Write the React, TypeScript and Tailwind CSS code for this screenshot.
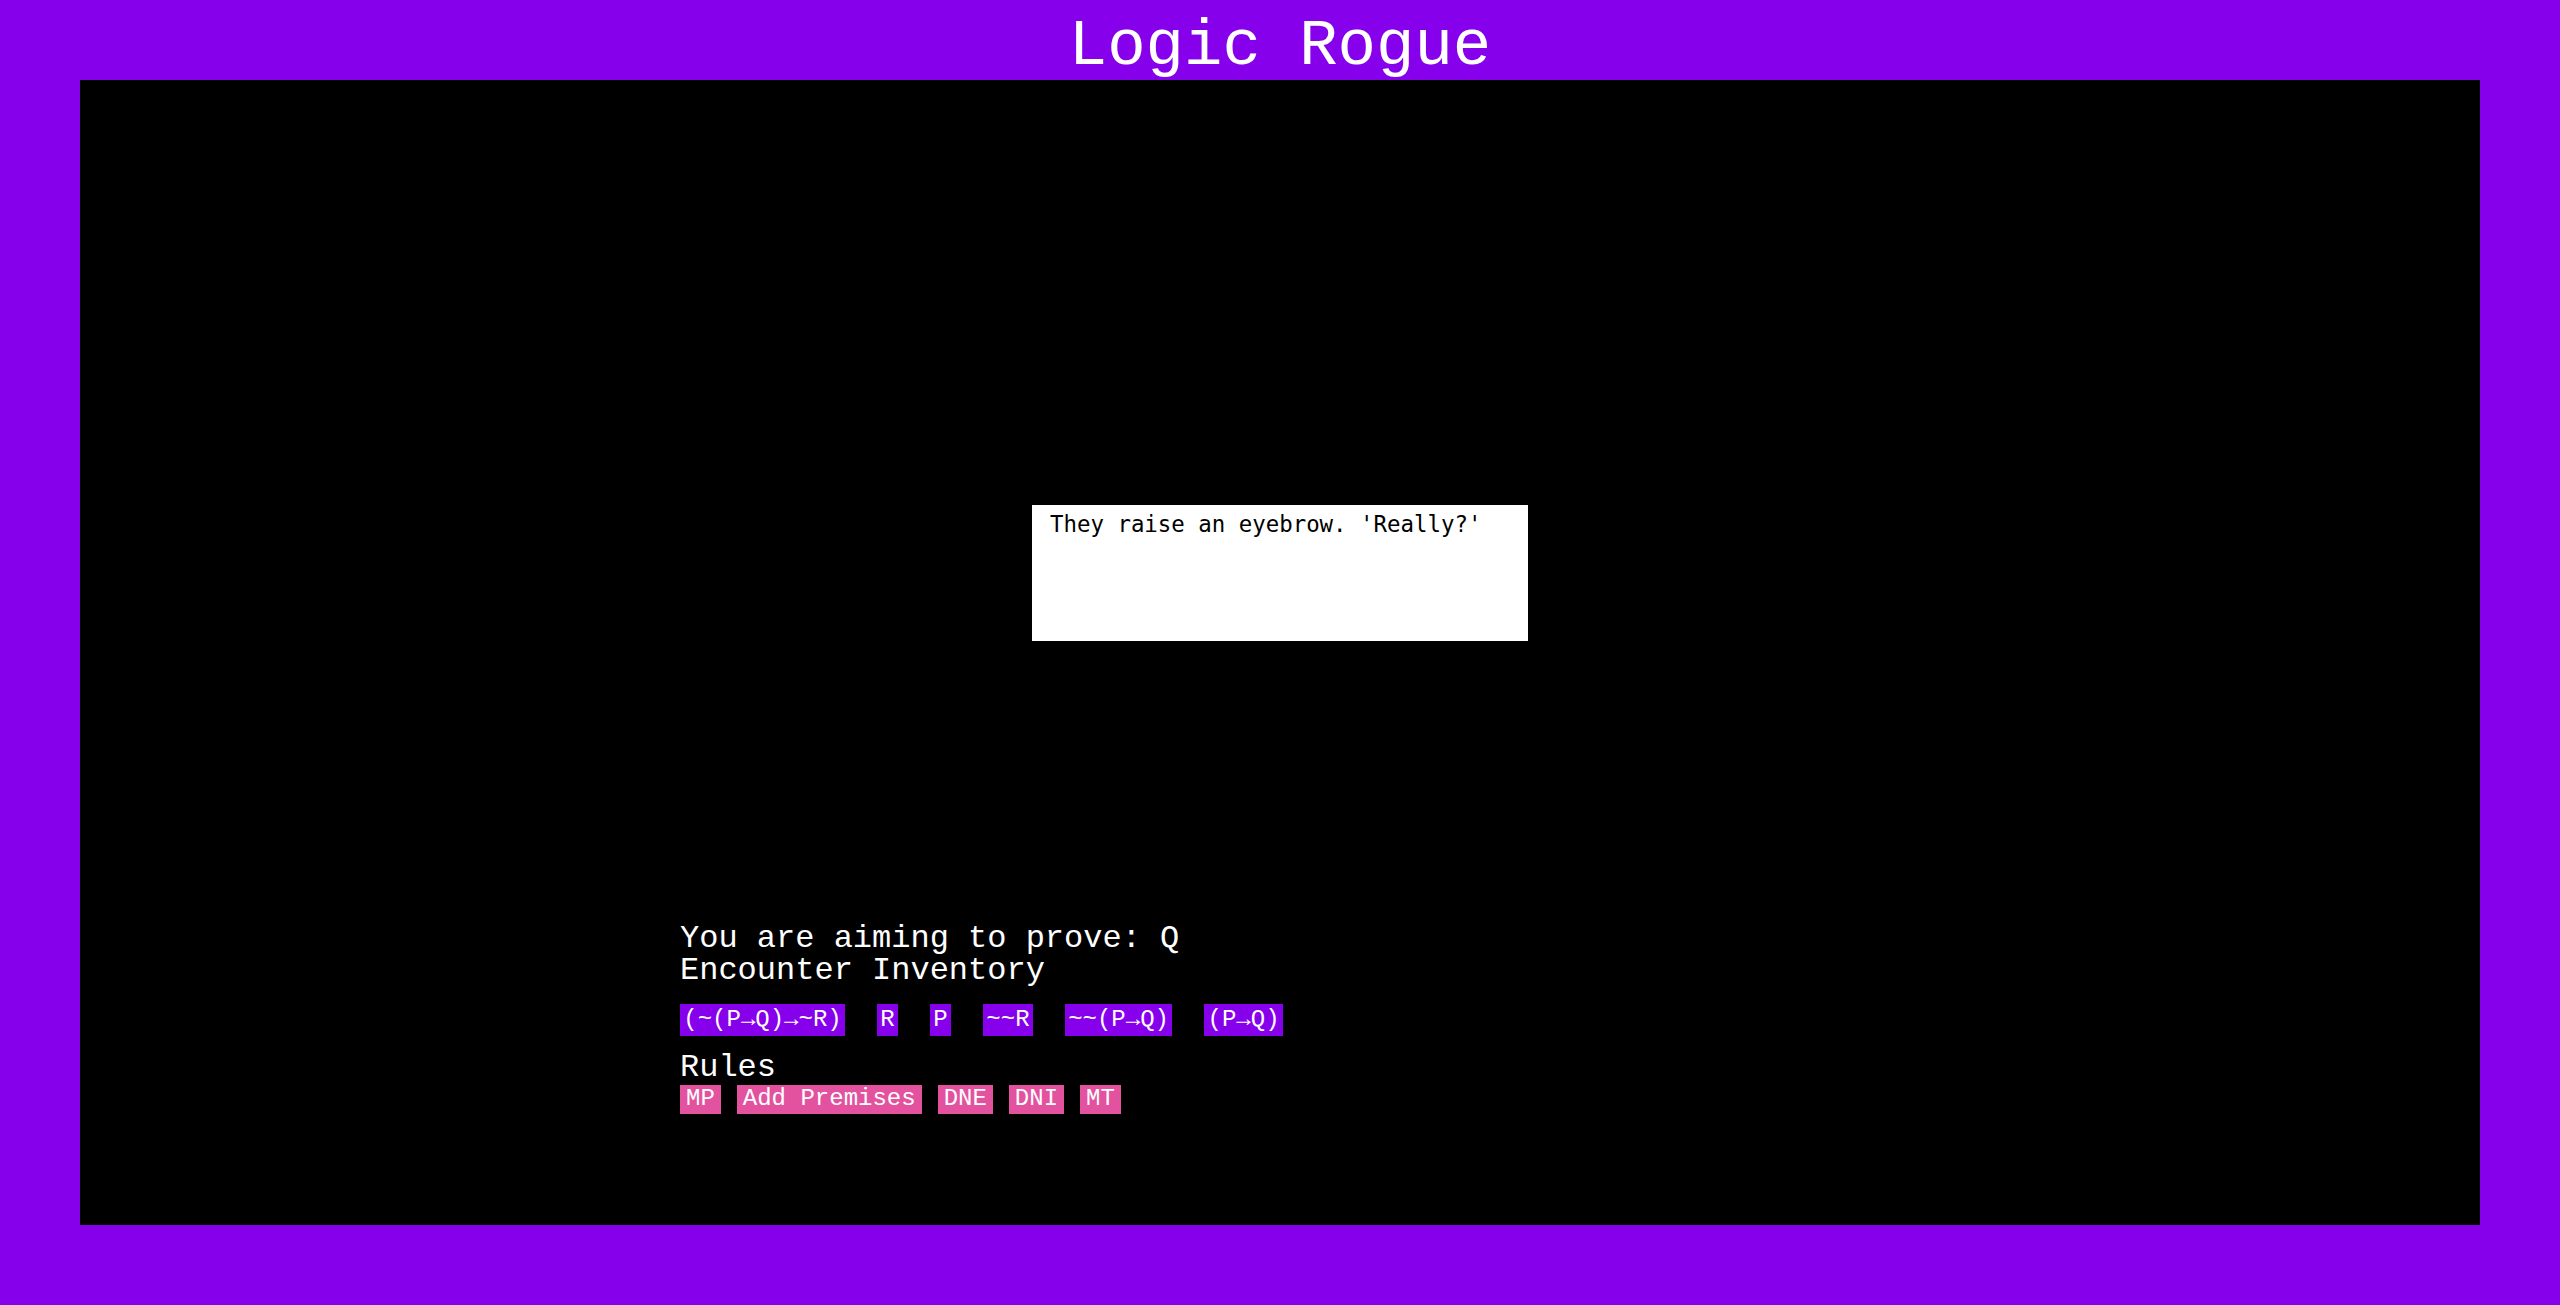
const mono = "font-['Courier_New','Courier','Liberation_Mono',monospace]";

const premises = ["(~(P→Q)→~R)", "R", "P", "~~R", "~~(P→Q)", "(P→Q)"];
const rules = ["MP", "Add Premises", "DNE", "DNI", "MT"];

export default function App() {
  return (
    <div className={`h-[1305px] w-full overflow-hidden bg-[#8700eb] px-20 pb-20 text-white ${mono}`}>
      <h1 className="h-20 pt-[11px] text-center text-[64px] leading-[72px] whitespace-nowrap">
        Logic Rogue
      </h1>
      <main className="h-[1145px] bg-black">
        <div className="mx-auto w-[1200px] pt-[425px]">
          <div className="mx-auto h-[136px] w-[496px] bg-white px-[18px] pt-[3px] font-['DejaVu_Sans_Mono',monospace] text-[22.4px] text-black">
            They raise an eyebrow. 'Really?'
          </div>

          <div className="mt-[282px] text-[32px] leading-[32.4px]">
            <p>You are aiming to prove: Q</p>
            <p>Encounter Inventory</p>
          </div>

          <div className="mt-[16px] flex gap-[32px]">
            {premises.map((p) => (
              <button
                key={p}
                className="flex h-[32.4px] items-center bg-[#8700eb] px-[3.3px] text-[24px] text-white"
              >
                {p}
              </button>
            ))}
          </div>

          <p className="mt-[16px] text-[32px] leading-[32.4px]">Rules</p>
          <div className="flex gap-[16px]">
            {rules.map((r) => (
              <button
                key={r}
                className="flex h-[29px] items-center bg-[#e3529f] px-[6px] text-[24px] whitespace-pre text-white"
              >
                {r}
              </button>
            ))}
          </div>
        </div>
      </main>
    </div>
  );
}
